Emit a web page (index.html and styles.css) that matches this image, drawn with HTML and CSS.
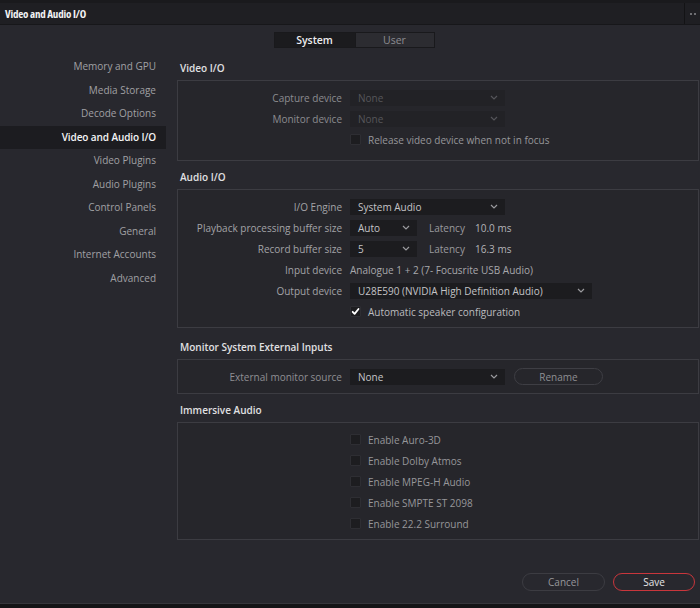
FILE: index.html
```html
<!DOCTYPE html>
<html>
<head>
<meta charset="utf-8">
<link rel="stylesheet" href="styles.css">
</head>
<body>
<div class="app">
  <header class="titlebar">
    <span class="title">Video and Audio I/O</span>
    <div class="tb-right"><span class="dot"></span><span class="dot"></span></div>
  </header>
  <div class="tabs-row">
    <div class="tabs">
      <span class="tab active">System</span>
      <span class="tab">User</span>
    </div>
  </div>
  <div class="body">
    <nav class="sidebar">
      <div class="nav-item">Memory and GPU</div>
      <div class="nav-item">Media Storage</div>
      <div class="nav-item">Decode Options</div>
      <div class="nav-item selected">Video and Audio I/O</div>
      <div class="nav-item">Video Plugins</div>
      <div class="nav-item">Audio Plugins</div>
      <div class="nav-item">Control Panels</div>
      <div class="nav-item">General</div>
      <div class="nav-item">Internet Accounts</div>
      <div class="nav-item">Advanced</div>
    </nav>
    <main class="content">
      <section class="section s-video">
        <h2 class="heading">Video I/O</h2>
        <div class="box box-video">
          <div class="row disabled">
            <span class="label">Capture device</span>
            <div class="select w-mid"><span class="val">None</span><svg class="chev" viewBox="0 0 8 5"><polyline points="1,1 4,4 7,1"/></svg></div>
          </div>
          <div class="row disabled">
            <span class="label">Monitor device</span>
            <div class="select w-mid"><span class="val">None</span><svg class="chev" viewBox="0 0 8 5"><polyline points="1,1 4,4 7,1"/></svg></div>
          </div>
          <div class="row">
            <span class="label"></span>
            <span class="check"></span><span class="check-label dim">Release video device when not in focus</span>
          </div>
        </div>
      </section>

      <section class="section s-audio">
        <h2 class="heading">Audio I/O</h2>
        <div class="box box-audio">
          <div class="row">
            <span class="label">I/O Engine</span>
            <div class="select w-mid"><span class="val">System Audio</span><svg class="chev" viewBox="0 0 8 5"><polyline points="1,1 4,4 7,1"/></svg></div>
          </div>
          <div class="row">
            <span class="label">Playback processing buffer size</span>
            <div class="select w-small"><span class="val">Auto</span><svg class="chev" viewBox="0 0 8 5"><polyline points="1,1 4,4 7,1"/></svg></div>
            <span class="lat-label">Latency</span><span class="lat-val">10.0 ms</span>
          </div>
          <div class="row">
            <span class="label">Record buffer size</span>
            <div class="select w-small"><span class="val">5</span><svg class="chev" viewBox="0 0 8 5"><polyline points="1,1 4,4 7,1"/></svg></div>
            <span class="lat-label">Latency</span><span class="lat-val">16.3 ms</span>
          </div>
          <div class="row">
            <span class="label">Input device</span>
            <span class="value">Analogue 1 + 2 (7- Focusrite USB Audio)</span>
          </div>
          <div class="row">
            <span class="label">Output device</span>
            <div class="select w-wide"><span class="val">U28E590 (NVIDIA High Definition Audio)</span><svg class="chev" viewBox="0 0 8 5"><polyline points="1,1 4,4 7,1"/></svg></div>
          </div>
          <div class="row">
            <span class="label"></span>
            <span class="check checked"><svg viewBox="0 0 12 12"><path d="M2.2 6.4 L4.8 9.2 L10 2.6"/></svg></span><span class="check-label">Automatic speaker configuration</span>
          </div>
        </div>
      </section>

      <section class="section s-monitor">
        <h2 class="heading">Monitor System External Inputs</h2>
        <div class="box box-monitor">
          <div class="row">
            <span class="label dim">External monitor source</span>
            <div class="select w-mid"><span class="val">None</span><svg class="chev" viewBox="0 0 8 5"><polyline points="1,1 4,4 7,1"/></svg></div>
            <span class="pill">Rename</span>
          </div>
        </div>
      </section>

      <section class="section s-immersive">
        <h2 class="heading">Immersive Audio</h2>
        <div class="box box-immersive">
          <div class="row"><span class="label"></span><span class="check"></span><span class="check-label dim">Enable Auro-3D</span></div>
          <div class="row"><span class="label"></span><span class="check"></span><span class="check-label dim">Enable Dolby Atmos</span></div>
          <div class="row"><span class="label"></span><span class="check"></span><span class="check-label dim">Enable MPEG-H Audio</span></div>
          <div class="row"><span class="label"></span><span class="check"></span><span class="check-label dim">Enable SMPTE ST 2098</span></div>
          <div class="row"><span class="label"></span><span class="check"></span><span class="check-label dim">Enable 22.2 Surround</span></div>
        </div>
      </section>
    </main>
  </div>
  <footer class="footer">
    <span class="btn">Cancel</span>
    <span class="btn primary">Save</span>
  </footer>
  <div class="bottom-strip"></div>
</div>
</body>
</html>
```

FILE: styles.css
```css
* { box-sizing: border-box; }
html, body { margin: 0; padding: 0; }
body {
  width: 700px;
  height: 608px;
  overflow: hidden;
  background: #28282e;
  font-family: "Open Sans", "Liberation Sans", sans-serif;
  font-size: 10px;
  color: #a3a3a7;
}
.app {
  display: flex;
  flex-direction: column;
  height: 608px;
}
.titlebar {
  height: 25px;
  flex: none;
  display: flex;
  align-items: center;
  justify-content: space-between;
  background: #1f1f23;
  border-top: 3px solid #1a1a1d;
  border-bottom: 1px solid #17171a;
  padding-left: 5px;
}
.title {
  color: #f2f2f3;
  font-weight: 700;
  font-size: 11px;
  font-stretch: condensed;
  letter-spacing: -0.2px;
}
.tb-right {
  height: 100%;
  width: 16px;
  border-left: 1px solid #131315;
  display: flex;
  align-items: center;
  justify-content: center;
  gap: 2px;
}
.dot {
  width: 2px;
  height: 2px;
  background: #8a8a8e;
  border-radius: 1px;
}
.tabs-row {
  height: 30px;
  flex: none;
  display: flex;
  justify-content: center;
  padding: 7px 0 0 8px;
}
.tabs {
  display: flex;
  height: 16px;
  border: 1px solid #19191c;
}
.tab {
  width: 79px;
  display: flex;
  align-items: center;
  justify-content: center;
  background: #2c2c31;
  color: #8d8d91;
  font-size: 10.5px;
}
.tab.active {
  width: 80px;
  background: #1b1b1e;
  color: #ececee;
  font-weight: 600;
}
.tab + .tab { border-left: 1px solid #19191c; }
.body {
  flex: 1;
  display: flex;
  min-height: 0;
}
.sidebar {
  width: 166px;
  flex: none;
  display: flex;
  flex-direction: column;
}
.nav-item {
  height: 23.5px;
  line-height: 23.5px;
  text-align: right;
  padding-right: 10px;
  color: #a0a0a4;
}
.nav-item.selected {
  background: #1c1c20;
  color: #f4f4f5;
  font-weight: 600;
  letter-spacing: -0.1px;
}
.content {
  flex: 1;
  padding: 5px 1px 0 11px;
}
.section + .section { margin-top: 8px; }
.s-monitor { margin-top: 11px !important; }
.heading {
  margin: 0 0 4px;
  padding-left: 3px;
  height: 16px;
  line-height: 16px;
  font-size: 10px;
  font-weight: 600;
  color: #e0e0e2;
}
.box {
  border: 1px solid #3c3c42;
  background: #26262b;
  padding: 6px 0 5px;
}
.box-video { padding-bottom: 10px; }
.box-monitor { padding-bottom: 6px; }
.row {
  height: 21px;
  display: flex;
  align-items: center;
}
.label {
  width: 164px;
  flex: none;
  text-align: right;
  margin-right: 8px;
  color: #a3a3a7;
  white-space: nowrap;
}
.row.disabled .label { color: #8c8c90; }
.label.dim { color: #8f8f93; }
.select {
  height: 16px;
  background: #1c1c1f;
  display: flex;
  align-items: center;
  justify-content: space-between;
  padding: 0 7px 0 8px;
  color: #c4c4c7;
  white-space: nowrap;
}
.row.disabled .select { background: #222226; color: #56565a; }
.w-mid { width: 155px; }
.w-small { width: 67px; }
.w-wide { width: 242px; }
.chev {
  width: 8px;
  height: 5px;
  fill: none;
  stroke: #9a9a9e;
  stroke-width: 1.2;
}
.row.disabled .chev { stroke: #55555a; }
.lat-label {
  margin-left: 12px;
  width: 46px;
  color: #9a9a9e;
}
.lat-val { color: #b4b4b7; }
.value { color: #a8a8ac; white-space: nowrap; }
.check {
  width: 11px;
  height: 11px;
  flex: none;
  background: #1d1d20;
  border: 1px solid #2e2e33;
  border-radius: 1px;
  margin-right: 7px;
  display: flex;
  align-items: center;
  justify-content: center;
}
.check svg {
  width: 11px;
  height: 11px;
  fill: none;
  stroke: #ffffff;
  stroke-width: 2.4;
  stroke-linecap: round;
  stroke-linejoin: round;
}
.check-label { color: #bcbcbf; white-space: nowrap; }
.check-label.dim { color: #96969a; }
.pill {
  margin-left: 9px;
  width: 89px;
  height: 17px;
  border: 1px solid #3e3e44;
  border-radius: 9px;
  display: flex;
  align-items: center;
  justify-content: center;
  color: #8f8f93;
}
.footer {
  height: 46px;
  flex: none;
  display: flex;
  justify-content: flex-end;
  align-items: flex-start;
  gap: 8px;
  padding: 16px 5px 0 0;
}
.btn {
  width: 83px;
  height: 18px;
  border: 1px solid #3c3c42;
  border-radius: 9px;
  display: flex;
  align-items: center;
  justify-content: center;
  color: #97979b;
}
.btn.primary {
  width: 82px;
  border-color: #c9363c;
  color: #e6e6e8;
}
.bottom-strip {
  height: 5px;
  flex: none;
  background: #141416;
  border-top: 1px solid #36363b;
}
```
